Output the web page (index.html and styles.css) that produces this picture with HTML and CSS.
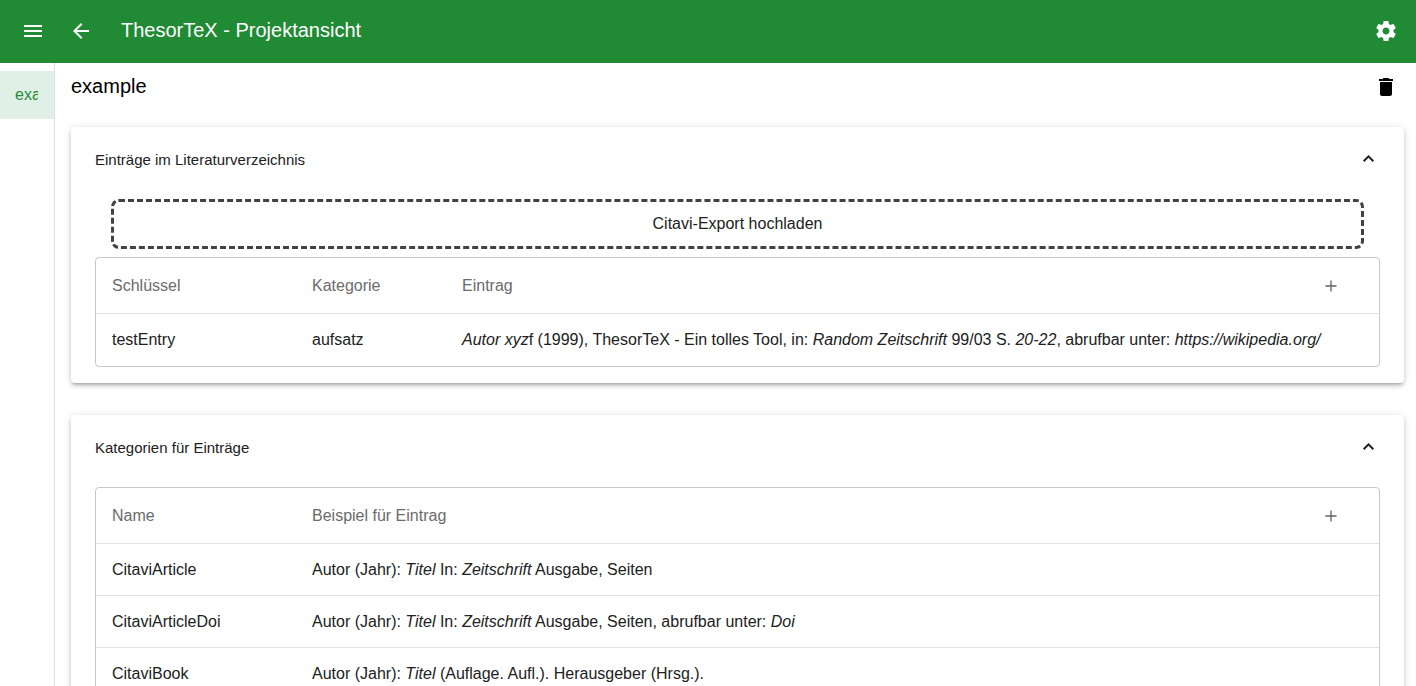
FILE: index.html
```html
<!DOCTYPE html>
<html lang="de">
<head>
<meta charset="utf-8">
<title>ThesorTeX - Projektansicht</title>
<link rel="stylesheet" href="styles.css">
</head>
<body>
<header class="toolbar">
  <svg class="icon" viewBox="0 0 24 24"><path d="M3 18h18v-2H3v2zm0-5h18v-2H3v2zm0-7v2h18V6H3z"/></svg>
  <svg class="icon icon-back" viewBox="0 0 24 24"><path d="M20 11H7.83l5.59-5.59L12 4l-8 8 8 8 1.41-1.41L7.83 13H20v-2z"/></svg>
  <h1 class="toolbar-title">ThesorTeX - Projektansicht</h1>
  <svg class="icon icon-settings" viewBox="0 0 24 24"><path d="M19.430 12.980c.04-.32.07-.64.07-.98s-.03-.66-.07-.98l2.110-1.650c.19-.15.24-.42.12-.64l-2-3.460c-.12-.22-.39-.3-.61-.22l-2.490 1c-.52-.4-1.080-.73-1.690-.98l-.38-2.650C14.460 2.180 14.250 2 14 2h-4c-.25 0-.46.18-.49.42l-.38 2.650c-.61.25-1.170.59-1.690.98l-2.490-1c-.23-.09-.49 0-.61.22l-2 3.460c-.13.22-.07.49.12.64l2.110 1.650c-.04.32-.07.65-.07.98s.03.66.07.98l-2.110 1.650c-.19.15-.24.42-.12.64l2 3.460c.12.22.39.3.61.22l2.490-1c.52.4 1.080.73 1.690.98l.38 2.650c.03.24.24.42.49.42h4c.25 0 .46-.18.49-.42l.38-2.650c.61-.25 1.170-.59 1.690-.98l2.490 1c.23.09.49 0 .61-.22l2-3.460c.12-.22.07-.49-.12-.64l-2.110-1.650zM12 15.500c-1.930 0-3.500-1.570-3.500-3.500s1.570-3.500 3.500-3.500 3.500 1.570 3.500 3.500-1.570 3.500-3.500 3.500z"/></svg>
</header>
<div class="body">
  <nav class="sidebar"><a class="nav-item"><span class="nav-label">example</span></a></nav>
  <main class="content">
    <div class="project-head">
      <h2 class="project-name">example</h2>
      <svg class="icon" viewBox="0 0 24 24"><path d="M6 19c0 1.1.9 2 2 2h8c1.1 0 2-.9 2-2V7H6v12zM19 4h-3.500l-1-1h-5l-1 1H5v2h14V4z"/></svg>
    </div>
    <section class="panel">
      <div class="panel-head"><span class="panel-title">Einträge im Literaturverzeichnis</span>
        <svg class="chevron" viewBox="0 0 12 8"><path d="M.7 6.200 5.500 1.400l4.800 4.800"/></svg></div>
      <div class="upload">Citavi-Export hochladen</div>
      <div class="table entries">
        <div class="row head"><span>Schlüssel</span><span>Kategorie</span><span>Eintrag</span><svg class="plus" viewBox="0 0 12 12"><path d="M.5 6h11M6 .5v11"/></svg></div>
        <div class="row"><span>testEntry</span><span>aufsatz</span><span class="wide"><i>Autor xyz</i>f (1999), ThesorTeX - Ein tolles Tool, in: <i>Random Zeitschrift</i> 99/03 S. <i>20-22</i>, abrufbar unter: <i>https://wikipedia.org/</i></span></div>
      </div>
    </section>
    <section class="panel">
      <div class="panel-head"><span class="panel-title">Kategorien für Einträge</span>
        <svg class="chevron" viewBox="0 0 12 8"><path d="M.7 6.200 5.500 1.400l4.800 4.800"/></svg></div>
      <div class="table categories">
        <div class="row head"><span>Name</span><span>Beispiel für Eintrag</span><svg class="plus" viewBox="0 0 12 12"><path d="M.5 6h11M6 .5v11"/></svg></div>
        <div class="row"><span>CitaviArticle</span><span>Autor (Jahr): <i>Titel</i> In: <i>Zeitschrift</i> Ausgabe, Seiten</span></div>
        <div class="row"><span>CitaviArticleDoi</span><span>Autor (Jahr): <i>Titel</i> In: <i>Zeitschrift</i> Ausgabe, Seiten, abrufbar unter: <i>Doi</i></span></div>
        <div class="row"><span>CitaviBook</span><span>Autor (Jahr): <i>Titel</i> (Auflage. Aufl.). Herausgeber (Hrsg.).</span></div>
      </div>
    </section>
  </main>
</div>
</body>
</html>
```

FILE: styles.css
```css
* { box-sizing: border-box; }
body {
  margin: 0;
  height: 100vh;
  overflow: hidden;
  display: flex;
  flex-direction: column;
  background: #fff;
  color: #212121;
  font: 16px/24px "Liberation Sans", Helvetica, Arial, sans-serif;
}
.icon { width: 24px; height: 24px; flex: none; fill: currentColor; }
.toolbar {
  display: flex;
  align-items: center;
  flex: none;
  height: 63px;
  padding: 0 18px 1px 21px;
  background: #218a34;
  color: #fff;
}
.icon-back { margin-left: 24px; }
.toolbar-title {
  flex: 1;
  margin: 0 0 2px 28px;
  font-size: 20px;
  font-weight: 400;
}
.body { display: flex; flex: 1; min-height: 0; }
.sidebar { width: 55px; flex: none; padding-top: 8px; border-right: 1px solid #e0e0e0; }
.nav-item {
  display: flex;
  align-items: center;
  height: 48px;
  padding: 0 16px 0 15px;
  background: #e1f0e7;
  color: #218a34;
}
.nav-label { overflow: hidden; white-space: nowrap; }
.content { flex: 1; min-width: 0; padding: 0 12px 0 16px; }
.project-head {
  display: flex;
  align-items: center;
  justify-content: space-between;
  height: 48px;
  margin-bottom: 16px;
  padding-right: 6px;
  color: #000;
}
.project-name { margin: 0 0 2px; font-size: 20px; font-weight: 400; }
.panel {
  margin-bottom: 32px;
  padding: 0 24px 16px;
  border-radius: 4px;
  box-shadow: 0 3px 3px -2px rgba(0,0,0,.2), 0 3px 4px 0 rgba(0,0,0,.14), 0 1px 8px 0 rgba(0,0,0,.12);
}
.panel-head {
  display: flex;
  align-items: center;
  justify-content: space-between;
  height: 64px;
  margin-bottom: 8px;
  padding: 2px 5px 0 0;
}
.panel-title { font-size: 15px; }
.chevron { width: 12px; height: 8px; margin-bottom: 3px; fill: none; stroke: #212121; stroke-width: 2; }
.upload {
  height: 50px;
  margin: 0 16px 8px;
  border: 3px dashed #424242;
  border-radius: 8px;
  line-height: 44px;
  text-align: center;
}
.table { border: 1px solid #c8c8c8; border-radius: 4px; }
.row {
  display: grid;
  align-items: center;
  height: 52px;
  padding: 0 16px;
  border-top: 1px solid #e0e0e0;
  white-space: nowrap;
}
.row:last-child { height: 53px; padding-bottom: 1px; }
.entries .row { grid-template-columns: 200px 150px 1fr 38px; }
.entries .wide { grid-column: 3 / 5; }
.categories .row { grid-template-columns: 200px 1fr 38px; }
.row.head { height: 55px; border-top: 0; color: #6b6b6b; }
.plus { width: 12px; height: 12px; fill: none; stroke: #616161; stroke-width: 1.3; }
```
